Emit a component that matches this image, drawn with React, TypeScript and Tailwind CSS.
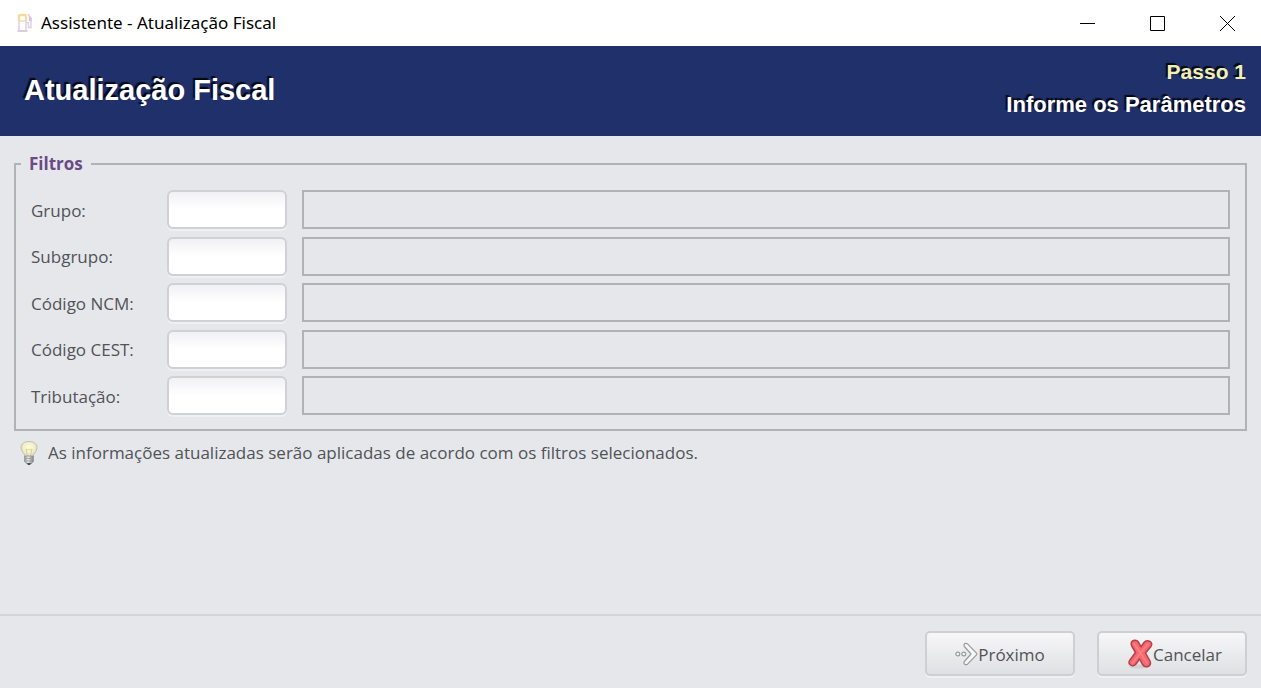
import React, { useState } from "react";

const FIELDS = [
  { id: "grupo", label: "Grupo:" },
  { id: "subgrupo", label: "Subgrupo:" },
  { id: "ncm", label: "Código NCM:" },
  { id: "cest", label: "Código CEST:" },
  { id: "tributacao", label: "Tributação:" },
];

function PumpIcon() {
  return (
    <svg width="18" height="22" viewBox="0 0 18 22" fill="none" aria-hidden="true">
      <path d="M3 9V19M10 9V19" stroke="#dfd0e6" strokeWidth="1.6" />
      <path d="M3 9V4.500Q3 3 4.500 3H8.500Q10 3 10 4.500V9" stroke="#f5dc98" strokeWidth="2.4" />
      <path d="M3.500 9H10" stroke="#f3dcc0" strokeWidth="1.6" />
      <path d="M1.500 19H11.500" stroke="#dccbe2" strokeWidth="2" />
      <path d="M11 10.500H12.500V15.500H15V6L12 2" stroke="#dccfe5" strokeWidth="1.4" />
      <path d="M12.800 4V9H15.500V6Z" fill="#d3c3e0" />
    </svg>
  );
}

function BulbIcon() {
  return (
    <svg width="20" height="26" viewBox="0 0 20 26" aria-hidden="true">
      <defs>
        <radialGradient id="glass" cx="0.5" cy="0.4" r="0.6">
          <stop offset="0" stopColor="#fffde0" />
          <stop offset="0.6" stopColor="#f2edc4" />
          <stop offset="1" stopColor="#d3d2c6" />
        </radialGradient>
        <linearGradient id="socket" x1="0" x2="1" y1="0" y2="0">
          <stop offset="0" stopColor="#8b8d8f" />
          <stop offset="0.4" stopColor="#e9eaeb" />
          <stop offset="1" stopColor="#77797b" />
        </linearGradient>
      </defs>
      <path
        d="M6 17C6 13 2 12 2 7.500C2 3.500 5.500 1.500 10 1.500S18 3.500 18 7.500C18 12 14 13 14 17Z"
        fill="url(#glass)"
        stroke="#c0c0b9"
      />
      <path d="M8.500 16L7 9L8.500 10L10 9L11.500 10L13 9L11.500 16" fill="none" stroke="#d2c98c" strokeWidth="0.8" />
      <path d="M5.500 16H14.500V21.500L12 24H8L5.500 21.500Z" fill="url(#socket)" stroke="#96989a" strokeWidth="0.8" />
      <path d="M6 18.500H14M6 21H14" stroke="#9c9ea0" strokeWidth="0.8" />
      <path d="M8 23H12L11 25H9Z" fill="#4b4d4f" />
    </svg>
  );
}

function NextIcon() {
  return (
    <svg width="23" height="24" viewBox="0 0 23 24" aria-hidden="true">
      <g fill="#f6f6f7" stroke="#97999c" strokeWidth="1.2">
        <circle cx="2.800" cy="12" r="1.900" />
        <circle cx="8.800" cy="12" r="1.900" />
        <path
          strokeLinejoin="round"
          d="M9 2.800Q10 0.500 12.500 1.800L21.500 11.200Q22.200 12 21.500 12.800L12.500 22.200Q10 23.500 9 21.200Q8.800 20 9.800 19L16 12L9.800 5Q8.800 4 9 2.800Z"
        />
      </g>
    </svg>
  );
}

function CancelIcon() {
  return (
    <svg width="25" height="30" viewBox="0 0 25 30" aria-hidden="true">
      <ellipse cx="11" cy="27.500" rx="10" ry="2" fill="#d0d1d4" />
      <path
        d="M3.200 5.500Q2.800 1.800 6.500 1.200Q9.500 1 11 4L13 7.800L16 3.500Q18 1 21.500 2.200Q25 4 23 7.500L17.500 14L22 22Q23.500 26 20 27.500Q16.500 28.500 14.500 25.500L11.500 20L8 25Q5.500 28 2.500 26Q-0.200 24.200 1.800 21.200L7.500 13.500L4 7.500Z"
        fill="#f4686e"
        stroke="#b5404a"
        strokeWidth="1.500"
        strokeLinejoin="round"
      />
      <path
        d="M6 4.500L12.500 14L19 24M20 5L12.500 14L4.500 24"
        fill="none"
        stroke="#fa8085"
        strokeWidth="1.800"
        strokeLinecap="round"
      />
    </svg>
  );
}

function TitleBar() {
  return (
    <div className="flex h-[46px] items-center bg-white pl-4 text-black">
      <PumpIcon />
      <span className="ml-[7px] flex-1 font-['Noto_Sans',sans-serif] text-[17px]">
        Assistente - Atualização Fiscal
      </span>
      <div className="flex h-full">
        <button type="button" aria-label="Minimizar" className="flex w-[68px] items-center justify-center">
          <svg width="15" height="15" viewBox="0 0 15 15" stroke="currentColor" fill="none">
            <path d="M0 7.500H15" />
          </svg>
        </button>
        <button type="button" aria-label="Maximizar" className="flex w-[72px] items-center justify-center">
          <svg width="15" height="15" viewBox="0 0 15 15" stroke="currentColor" fill="none">
            <path d="M0.500 0.500H14.500V14.500H0.500Z" />
          </svg>
        </button>
        <button type="button" aria-label="Fechar" className="flex w-[68px] items-center justify-center">
          <svg width="15" height="15" viewBox="0 0 15 15" stroke="currentColor" fill="none">
            <path d="M0 0L15 15M15 0L0 15" />
          </svg>
        </button>
      </div>
    </div>
  );
}

function WizardHeader() {
  return (
    <header className="flex h-[90px] items-center justify-between bg-[#20306a] pl-6 pr-[15px] font-['Liberation_Sans',sans-serif] font-bold text-white [text-shadow:-2px_-2px_1px_#05070f]">
      <h1 className="text-[29px]">Atualização Fiscal</h1>
      <div className="pb-[6px] text-right leading-[33px]">
        <p className="text-[21px] text-[#f1efb4]">Passo 1</p>
        <p className="text-[22px]">Informe os Parâmetros</p>
      </div>
    </header>
  );
}

export default function App() {
  const [values, setValues] = useState<Record<string, string>>({});

  return (
    <div className="flex min-h-screen flex-col bg-[#e6e7eb] font-['Open_Sans',sans-serif] text-[17px] text-[#505357]">
      <TitleBar />
      <WizardHeader />

      <main className="flex-1 px-[14px] pt-4">
        <fieldset className="border-2 border-[#b0b2b6] px-[15px] pb-[14px]">
          <legend className="-ml-[10px] px-2 leading-6 font-bold text-[#6b4a86]">Filtros</legend>
          <div className="mt-[14px] flex h-[225px] flex-col justify-between">
            {FIELDS.map((field) => (
              <div key={field.id} className="flex h-[39px] items-center">
                <label htmlFor={field.id} className="w-[136px] shrink-0 pt-[2px]">
                  {field.label}
                </label>
                <input
                  id={field.id}
                  type="text"
                  value={values[field.id] ?? ""}
                  onChange={(e) => setValues({ ...values, [field.id]: e.target.value })}
                  className="h-full w-[120px] shrink-0 rounded-md border-2 border-[#cfd1d6] bg-linear-to-b from-[#f1f1f5] to-white to-50% px-2 shadow-[0_2px_0_#eff0f3]"
                />
                <input
                  type="text"
                  readOnly
                  aria-label={`Descrição ${field.label}`}
                  className="ml-[15px] h-full min-w-0 flex-1 border-2 border-[#b0b2b6] px-2"
                />
              </div>
            ))}
          </div>
        </fieldset>

        <p className="mt-[9px] flex items-center gap-[9px] pl-[5px]">
          <BulbIcon />
          As informações atualizadas serão aplicadas de acordo com os filtros selecionados.
        </p>
      </main>

      <footer className="flex justify-end gap-[22px] border-t-2 border-[#d3d5d9] px-[14px] pt-[15px] pb-3">
        <button
          type="button"
          className="flex h-[45px] w-[150px] items-center justify-center rounded-[5px] border-2 border-[#cdcfd4] bg-linear-to-b from-[#f7f7f8] to-[#dfe0e3] shadow-[0_2px_0_#eff0f3]"
        >
          <NextIcon />
          <span className="pt-[2px]">Próximo</span>
        </button>
        <button
          type="button"
          className="flex h-[45px] w-[150px] items-center justify-center rounded-[5px] border-2 border-[#cdcfd4] bg-linear-to-b from-[#f7f7f8] to-[#dfe0e3] pl-[6px] shadow-[0_2px_0_#eff0f3]"
        >
          <CancelIcon />
          <span className="pt-[2px]">Cancelar</span>
        </button>
      </footer>
    </div>
  );
}
